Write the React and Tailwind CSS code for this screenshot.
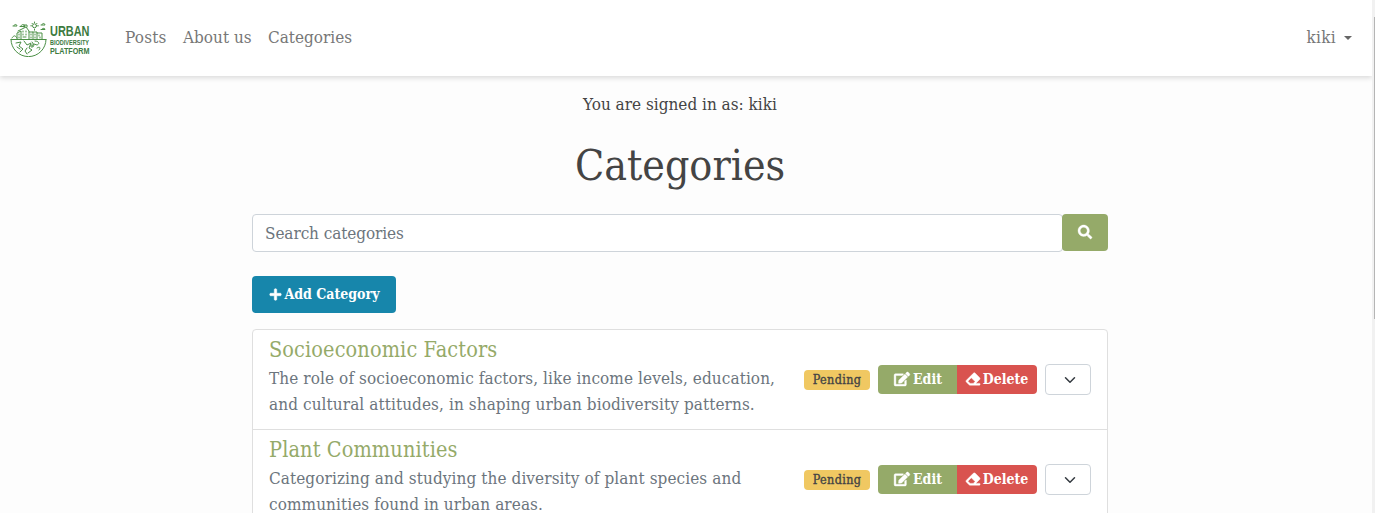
import React from "react";
import { FaPlus, FaSearch, FaEdit, FaEraser } from "react-icons/fa";

const categories = [
  {
    name: "Socioeconomic Factors",
    lines: [
      "The role of socioeconomic factors, like income levels, education,",
      "and cultural attitudes, in shaping urban biodiversity patterns.",
    ],
  },
  {
    name: "Plant Communities",
    lines: [
      "Categorizing and studying the diversity of plant species and",
      "communities found in urban areas.",
    ],
  },
];

function Logo() {
  return (
    <a href="#" className="flex h-[36px] w-[82px] items-start gap-[3px]">
      <svg width="37" height="36" viewBox="0 0 37 36" fill="none" stroke="#4b8f45" strokeWidth="1" strokeLinecap="round" strokeLinejoin="round" className="mt-px shrink-0">
        <path d="M1 18.500h35M1 18.500a17.400 17 0 0 0 35 0" />
        <path d="M3 5h4c0-2-3-2-3-.5M10 5.500h5c0-2.500-4-2.500-4-.5M31 4h4c0-2-3-2-3-.5M31 8.500h4c0-1.500-2-1.500-3-.5" />
        <circle cx="24.500" cy="4.800" r="2" />
        <path d="M24.500 1v.6M24.500 8.200v1M20.800 4.800h.7M27.600 4.800h.8M22 2.300l.4.4M27 2.300l-.4.4" />
        <path d="M7 18v-6l4-2v8M8 10l8-4 3 4v8M13 10v1M16 10v1M13 13v1M16 13v1M13 16h3M19 11h4v7M23 11h4v7M27 12h5v6M29 14v1M30 16v1M21 13v1M21 16v1M25 13v1M25 16v1M9 13v1M9 16v1M14 6V4h3v2" />
        <path d="M2 17c2-3 3-3 5 0" />
        <path d="M6 22l5-1-2 4 4 3-3 3M14 20l3 4 4-2-2 5 3 2-4 3M25 20c4 0 5 3 2 4l-3-1M27 27c3-2 4 0 2 2M17 33l-2-3 2-3M22 21l2 3M7 26l3 2" />
        <circle cx="22" cy="25" r="1.200" />
      </svg>
      <svg width="40" height="36" className="shrink-0 overflow-visible fill-[#3c7a3f] font-['Liberation_Sans_Narrow','Liberation_Sans',sans-serif] font-bold">
        <text x="0" y="16" fontSize="15.500" textLength="39.500" lengthAdjust="spacingAndGlyphs">URBAN</text>
        <text x="0" y="24.500" fontSize="7" textLength="39" lengthAdjust="spacingAndGlyphs">BIODIVERSITY</text>
        <text x="0" y="33.500" fontSize="9.500" textLength="39.500" lengthAdjust="spacingAndGlyphs">PLATFORM</text>
      </svg>
    </a>
  );
}

function CategoryRow({ category }) {
  return (
    <li className="flex h-[100px] shrink-0 items-center border-b border-[#dfdfdf] pr-4 pl-4">
      <div className="h-full w-[535px] shrink-0 pt-[8px]">
        <h5 className="text-[21.5px] leading-[24px] tracking-[0.11px] text-[#95aa69]">{category.name}</h5>
        <p className="mt-[3px] text-[17px] leading-[26px] tracking-[0.09px] whitespace-nowrap text-[#6c757d]">
          {category.lines[0]}
          <br />
          {category.lines[1]}
        </p>
      </div>
      <span className="flex h-[20px] w-[66px] shrink-0 items-center justify-center rounded-[4px] bg-[#f0c862] pt-px text-[12.5px] tracking-[0.35px] text-[#444] [-webkit-text-stroke:0.35px_#444]">Pending</span>
      <div className="ml-2 flex h-[29px] w-[159px] shrink-0 overflow-hidden rounded-[4px] text-[14px] font-bold text-white">
        <button className="flex w-[79px] items-center justify-center gap-[3px] bg-[#95aa69]">
          <FaEdit className="-mt-px ml-px h-[14px] w-[16px] overflow-visible stroke-current [stroke-width:14px]" />
          Edit
        </button>
        <button className="flex w-[80px] items-center justify-center gap-[3px] bg-[#d9534f]">
          <FaEraser className="-mt-px h-[14px] w-[14px] overflow-visible stroke-current [stroke-width:18px]" />
          Delete
        </button>
      </div>
      <button className="ml-2 flex h-[31px] w-[46px] shrink-0 items-center rounded-[4px] border border-[#ced4da] bg-white pl-[18px]">
        <svg width="12" height="12" viewBox="0 0 16 16" fill="none" stroke="#343a40" strokeWidth="2" strokeLinecap="round" strokeLinejoin="round">
          <path d="M2 5l6 6 6-6" />
        </svg>
      </button>
    </li>
  );
}

export default function App() {
  return (
    <div className="flex h-[513px] w-[1375px] overflow-hidden bg-[#fdfdfd] font-['DejaVu_Serif_Condensed','DejaVu_Serif',serif] font-stretch-semi-condensed text-[#444]">
      <div className="flex w-[1372px] shrink-0 flex-col">
        <nav className="flex h-[76px] shrink-0 items-center bg-white pr-[20px] pl-[10px] text-[17px] text-[#777] shadow-[0_2px_5px_rgba(0,0,0,0.14)]">
          <Logo />
          <div className="ml-[33px] flex flex-1 gap-[16px]">
            <a href="#" className="w-[42px] tracking-[0.2px] whitespace-nowrap">Posts</a>
            <a href="#" className="w-[69px] whitespace-nowrap">About us</a>
            <a href="#" className="whitespace-nowrap">Categories</a>
          </div>
          <a href="#" className="flex items-center gap-[8px] tracking-[0.3px]">
            kiki
            <span className="border-x-4 border-t-4 border-x-transparent border-t-[#666]" />
          </a>
        </nav>
        <main className="ml-[252px] flex w-[856px] flex-col">
          <p className="mt-[15px] text-center text-[17px] leading-[26px]">You are signed in as: kiki</p>
          <h1 className="mt-[25px] text-center text-[42.5px] leading-[48px]">Categories</h1>
          <form className="mt-[24px] flex h-[38px] shrink-0 items-start">
            <input placeholder="Search categories" className="h-[38px] w-[811px] shrink-0 rounded-[4px] border border-[#ced4da] bg-white px-3 text-[17px] tracking-[-0.08px] placeholder:text-[#6c757d]" />
            <button type="button" className="-ml-px flex h-[37px] w-[46px] shrink-0 items-center justify-center rounded-[4px] bg-[#95aa69] pb-[2px] text-white">
              <FaSearch size={14} className="overflow-visible stroke-current [stroke-width:14px]" />
            </button>
          </form>
          <button className="mt-[24px] flex h-[37px] w-[144px] shrink-0 items-center justify-center gap-[3px] rounded-[4px] bg-[#1786ab] text-[14px] font-bold whitespace-nowrap text-white">
            <FaPlus className="-mt-px h-[13px] w-[13px] overflow-visible stroke-current [stroke-width:22px]" />
            Add Category
          </button>
          <ul className="mt-[16px] flex flex-col rounded-t-[4px] border border-[#dfdfdf] bg-white">
            {categories.map((c) => (
              <CategoryRow key={c.name} category={c} />
            ))}
          </ul>
        </main>
      </div>
      <div className="h-full w-[3px] shrink-0 bg-[#f1f1f1] pt-[17px] pl-[2px]">
        <div className="h-[302px] w-px bg-[#b5b5b5]" />
      </div>
    </div>
  );
}
